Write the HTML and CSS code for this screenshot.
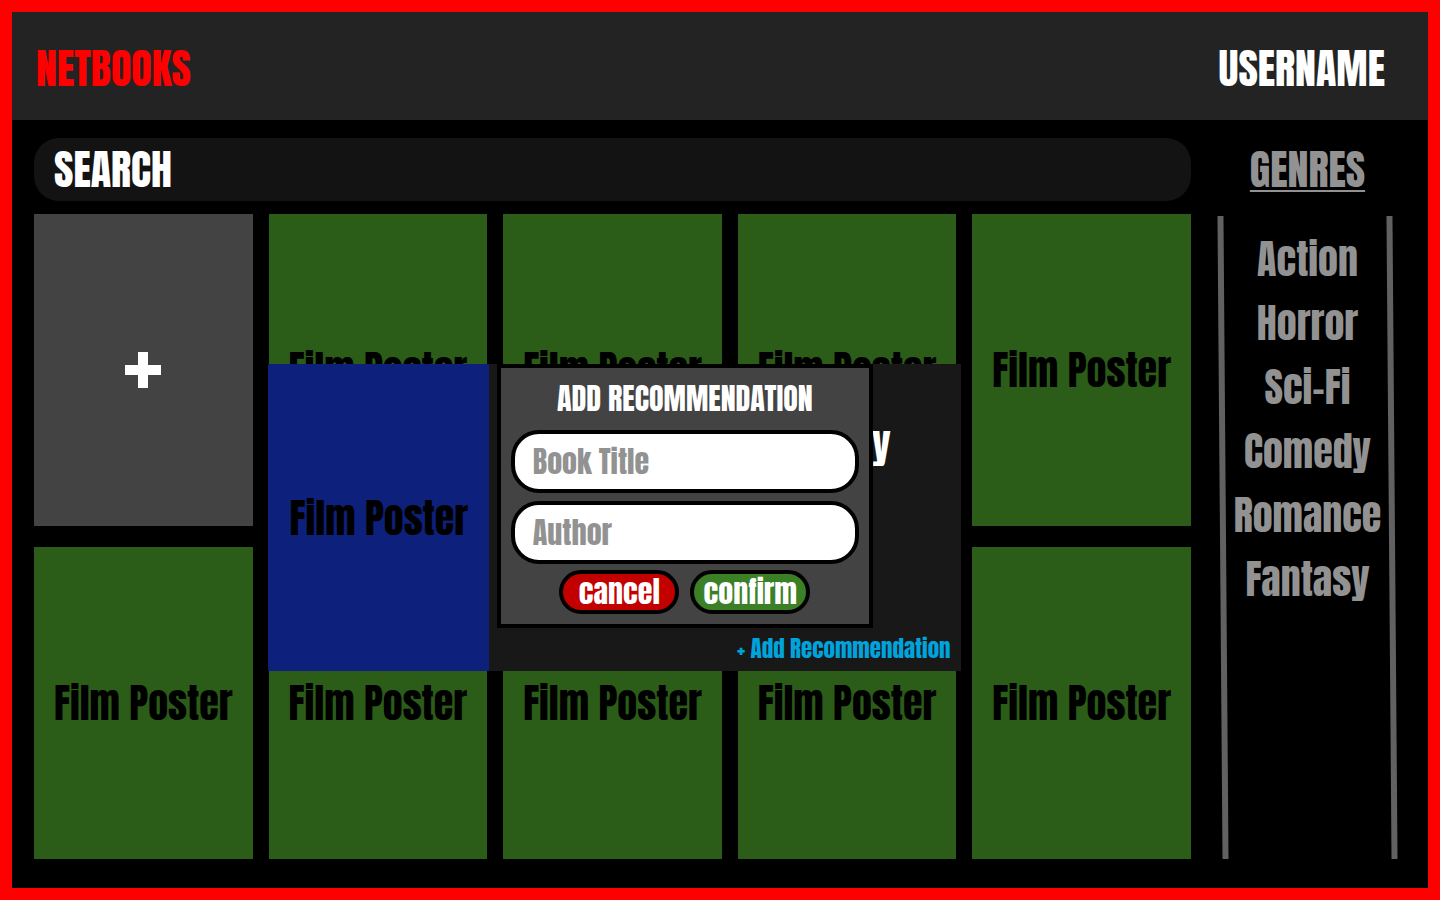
FILE: index.html
```html
<!DOCTYPE html>
<html lang="en">
<head>
<meta charset="utf-8">
<title>Netbooks</title>
<link rel="stylesheet" href="styles.css">
</head>
<body class="page">
<header class="topbar">
  <a class="logo" href="#">NETBOOKS</a>
  <a class="user" href="#">USERNAME</a>
</header>
<div class="content">
  <main class="library">
    <input class="search" type="search" placeholder="SEARCH" aria-label="Search">
    <div class="shelf">
      <button class="card card-add" type="button" aria-label="Add">
        <svg class="plus" viewBox="0 0 38 38" aria-hidden="true"><path d="M14 1h10v13h13v10H24v13H14V24H1V14h13z" fill="#fff"/></svg>
      </button>
      <article class="card">Film Poster</article>
      <article class="card">Film Poster</article>
      <article class="card">Film Poster</article>
      <article class="card">Film Poster</article>
      <article class="card">Film Poster</article>
      <article class="card">Film Poster</article>
      <article class="card">Film Poster</article>
      <article class="card">Film Poster</article>
      <article class="card">Film Poster</article>
      <section class="detail">
        <div class="detail-poster">Film Poster</div>
        <div class="detail-info">
          <h2 class="detail-title">y</h2>
          <a class="detail-link" href="#">+ Add Recommendation</a>
        </div>
        <form class="modal">
          <h3 class="modal-title">ADD RECOMMENDATION</h3>
          <div class="fields">
            <input class="field" type="text" placeholder="Book Title" aria-label="Book Title">
            <input class="field" type="text" placeholder="Author" aria-label="Author">
          </div>
          <div class="actions">
            <button class="btn btn-cancel" type="button">cancel</button>
            <button class="btn btn-confirm" type="button">confirm</button>
          </div>
        </form>
      </section>
    </div>
  </main>
  <nav class="genres">
    <h2 class="genres-title">GENRES</h2>
    <ul class="genres-list">
      <li><a href="#">Action</a></li>
      <li><a href="#">Horror</a></li>
      <li><a href="#">Sci-Fi</a></li>
      <li><a href="#">Comedy</a></li>
      <li><a href="#">Romance</a></li>
      <li><a href="#">Fantasy</a></li>
    </ul>
  </nav>
</div>
</body>
</html>
```
FILE: styles.css
```css
* { box-sizing: border-box; }

.page {
  margin: 0;
  min-height: 100vh;
  display: flex;
  flex-direction: column;
  border: 12px solid #f00;
  background: #000;
  color: #fff;
  font-family: Impact, Anton, "Liberation Sans", sans-serif;
  font-weight: 400;
  font-size: 40px;
}

a { color: inherit; text-decoration: none; }
h2, h3 { margin: 0; font-weight: inherit; }
input, button { font: inherit; color: inherit; }

.topbar {
  display: flex;
  align-items: center;
  justify-content: space-between;
  height: 108px;
  padding: 4px 43px 0 24px;
  background: #232323;
  font-size: 42px;
}
.logo { color: #f00; }

.content {
  flex: 1;
  display: flex;
  gap: 28px;
  padding: 18px 32px 29px 22px;
}

.library {
  flex: 1;
  min-width: 0;
  display: flex;
  flex-direction: column;
  gap: 13px;
}

.search {
  width: 100%;
  height: 63px;
  padding: 0 20px;
  border: 0;
  border-radius: 25px;
  background: #131313;
  font-size: 42px;
}
.search::placeholder { color: #fff; }

.shelf {
  position: relative;
  flex: 1;
  display: grid;
  grid-template-columns: repeat(5, 1fr);
  grid-auto-rows: 1fr;
  gap: 21px 16px;
}

.card {
  display: flex;
  align-items: center;
  justify-content: center;
  border: 0;
  background: #2b5d18;
  color: #000;
  white-space: nowrap;
}
.card-add { background: #434343; }
.plus { width: 38px; height: 38px; }

.detail {
  position: absolute;
  top: 150px;
  left: calc(20% + 3px);
  width: calc(60% - 2px);
  height: 307px;
  display: flex;
  background: #181818;
}
.detail-poster {
  flex: 0 0 221px;
  display: flex;
  align-items: center;
  justify-content: center;
  background: #0c207c;
  color: #000;
}
.detail-info {
  flex: 1;
  display: flex;
  flex-direction: column;
  align-items: flex-end;
  justify-content: space-between;
  padding: 48px 10px 4px;
}
.detail-title {
  padding-right: 60px;
  font-size: inherit;
  line-height: 64px;
}
.detail-link {
  color: #00a3dc;
  font-size: 23px;
  line-height: 36px;
}

.modal {
  position: absolute;
  top: 0;
  left: 33%;
  width: 376px;
  padding: 0 10px 10px;
  border: 4px solid #000;
  background: #434343;
}
.modal-title {
  font-size: 30px;
  line-height: 62px;
  text-align: center;
}
.fields {
  display: flex;
  flex-direction: column;
  gap: 8px;
}
.field {
  width: 100%;
  height: 63px;
  padding: 0 18px;
  border: 4px solid #000;
  border-radius: 28px;
  background: #fff;
  color: #000;
  font-size: 30px;
}
.field::placeholder { color: #929292; }
.actions {
  display: flex;
  justify-content: center;
  gap: 11px;
  padding-top: 6px;
}
.btn {
  width: 120px;
  height: 44px;
  padding: 0;
  border: 4px solid #000;
  border-radius: 22px;
  font-size: 30px;
  line-height: 32px;
}
.btn-cancel { background: #c30000; }
.btn-confirm { background: #3b8026; }

.genres {
  flex: 0 0 177px;
  display: flex;
  flex-direction: column;
  color: #929292;
}
.genres-title {
  font-size: 42px;
  line-height: 64px;
  text-align: center;
  text-decoration: underline 2px;
  text-underline-offset: 3px;
}
.genres-list {
  position: relative;
  flex: 1;
  margin: 14px 0 0;
  padding: 11px 0;
  list-style: none;
  line-height: 64px;
  text-align: center;
}
/* side rails lean slightly to the right */
.genres-list::before {
  content: "";
  position: absolute;
  inset: 0 1px;
  border: solid #616161;
  border-width: 0 6px;
  transform: skewX(0.45deg);
  pointer-events: none;
}
```
